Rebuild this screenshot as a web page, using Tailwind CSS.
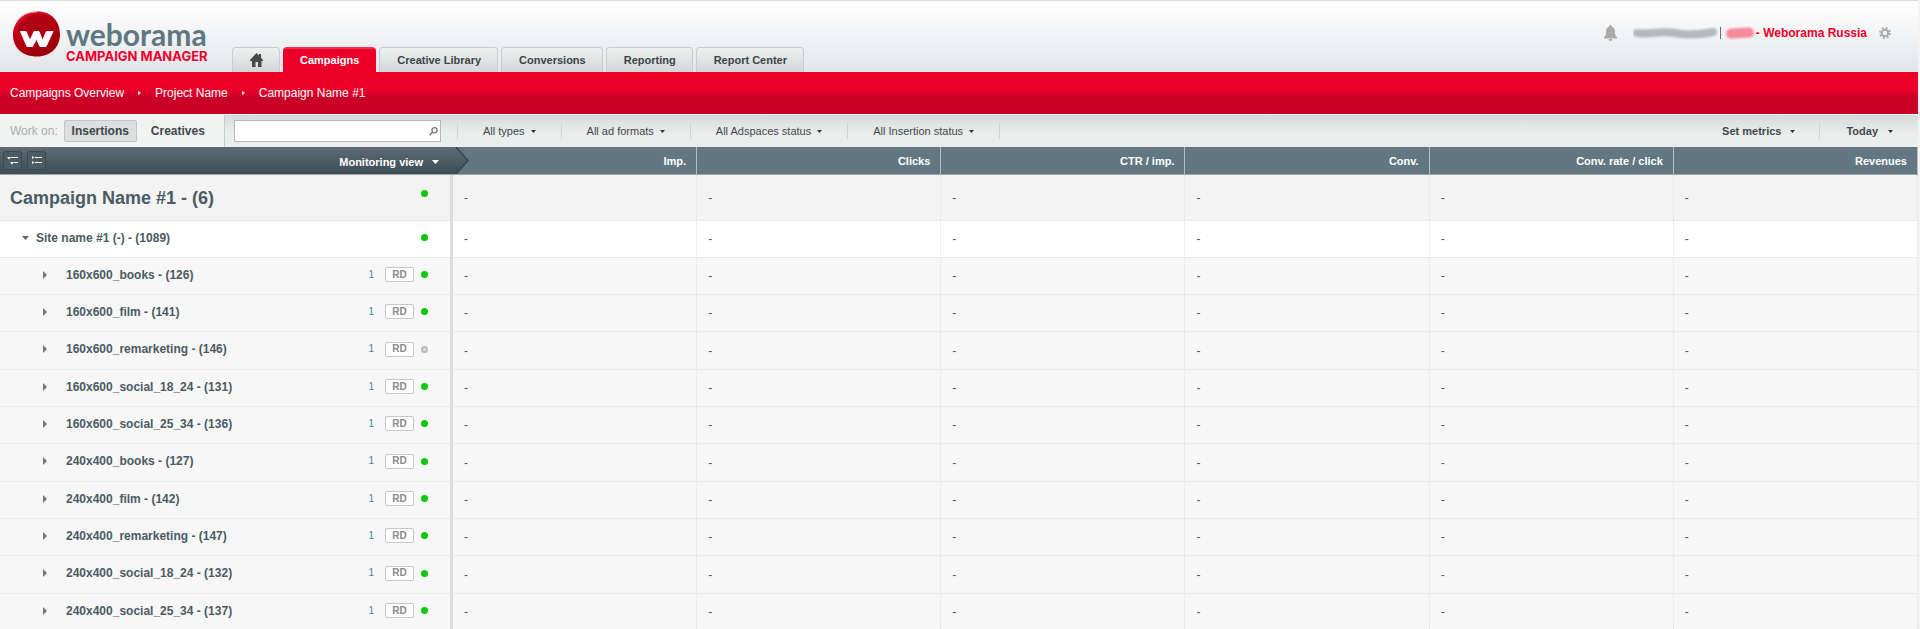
<!DOCTYPE html>
<html lang="en">
<head>
<meta charset="utf-8">
<title>Weborama Campaign Manager</title>
<script src="https://cdn.jsdelivr.net/npm/@tailwindcss/browser@4"></script>
</head>
<body class="h-screen overflow-hidden bg-[#f3f3f3] pr-0.5 font-['Liberation_Sans',Arial,sans-serif] text-xs text-[#4a5b64]">
<header class="flex h-18 items-end justify-between border-t border-[#dcdcde] bg-linear-to-b from-white to-[#e3e6e9]">
  <div class="flex items-end self-stretch">
    <a href="#" aria-label="Weborama Campaign Manager" class="flex w-58 self-start pt-[10px] pl-3">
      <svg class="size-12 shrink-0" viewBox="0 0 48 48" aria-hidden="true">
        <defs>
          <linearGradient id="ball" x1="0" y1="0" x2="0.6" y2="1"><stop offset="0" stop-color="#e8102c"/><stop offset=".5" stop-color="#b80014"/><stop offset="1" stop-color="#980008"/></linearGradient>
          <linearGradient id="shade" x1="0" y1="0" x2="1" y2="1"><stop offset="0" stop-color="#a80012"/><stop offset="1" stop-color="#b00010"/></linearGradient>
        </defs>
        <path d="M25 .5C38 0 48 9 48 23c0 13-9 22.500-23 22.500C11 45.500 1 37 1 24 1 11 11 1 25 .5z" fill="url(#ball)"/>
        <path d="M6 16C10 7 18 3 27 3c10 0 18 7 19 17 0 0-8 7-19 8C15 29 6 25 6 16z" fill="url(#shade)" opacity=".75"/>
        <path d="M4 12C9 3 17 1 25 1" stroke="#f4a0a8" stroke-width="1" fill="none"/>
        <path d="M8.500 20.500h5.500l4 9 4-9h5l3.500 9 4-9h6.500l-7 15h-6l-3.500-7.500-4 7.500h-5.500z" fill="#fff" stroke="#fff" stroke-linejoin="round"/>
      </svg>
      <span class="flex flex-col pt-2 pl-[6px] font-[Lato,sans-serif]">
        <span class="text-[30px] leading-[30px] font-bold text-[#5f7780]">weborama</span>
        <span class="font-[Inter,sans-serif] text-[13px] leading-[15px] font-bold text-[#ee002c]">CAMPAIGN&nbsp;MANAGER</span>
      </span>
    </a>
    <nav class="flex gap-[3px] text-[11px] font-bold text-[#3b4448]" aria-label="Main">
      <a href="#" aria-label="Home" class="flex h-[25px] w-12 items-center justify-center rounded-t-sm border border-b-0 border-[#c9cccd] bg-linear-to-b from-[#eff1f1] to-[#d2d6d6]">
        <svg class="h-[14px] w-[13px]" viewBox="0 0 13 14" fill="#4a4a4a" aria-hidden="true"><path d="M6.500 0L9 2.600V1h2v3.700L13 7v1h-1.500v6H8V9H5.500v5H2V8H0V7z"/></svg>
      </a>
      <a href="#" aria-current="page" class="flex h-[25px] items-center rounded-t-sm border-t-2 border-[#f2304f] bg-[#ec002a] px-[17px] text-white">Campaigns</a>
      <a href="#" class="flex h-[25px] items-center rounded-t-sm border border-b-0 border-[#c9cccd] bg-linear-to-b from-[#eff1f1] to-[#d2d6d6] pr-4 pl-[17px]">Creative Library</a>
      <a href="#" class="flex h-[25px] items-center rounded-t-sm border border-b-0 border-[#c9cccd] bg-linear-to-b from-[#eff1f1] to-[#d2d6d6] pr-4 pl-[17px]">Conversions</a>
      <a href="#" class="flex h-[25px] items-center rounded-t-sm border border-b-0 border-[#c9cccd] bg-linear-to-b from-[#eff1f1] to-[#d2d6d6] pr-4 pl-[17px]">Reporting</a>
      <a href="#" class="flex h-[25px] items-center rounded-t-sm border border-b-0 border-[#c9cccd] bg-linear-to-b from-[#eff1f1] to-[#d2d6d6] pr-4 pl-[17px]">Report Center</a>
    </nav>
  </div>
  <div class="flex items-center self-start pt-6 pr-[27px] font-bold text-[#ec002a]">
    <button type="button" aria-label="Notifications" class="mr-4">
      <svg class="h-[16px] w-[13px]" viewBox="0 0 14 17" fill="#aaa" aria-hidden="true"><path d="M7 0c.8 0 1.200.6 1.200 1.400C10.600 2 11.700 4 11.700 6.500c0 3.500.6 5 2.300 6.500v1.500H0V13c1.700-1.500 2.300-3 2.300-6.500C2.300 4 3.400 2 5.800 1.400 5.800.6 6.200 0 7 0zM5 15h4c0 1-.8 2-2 2s-2-1-2-2z"/></svg>
    </button>
    <svg class="h-[14px] w-[86px]" viewBox="0 0 86 14" aria-hidden="true"><defs><filter id="soft" filterUnits="userSpaceOnUse" x="-4" y="-4" width="100" height="24"><feGaussianBlur stdDeviation="1.200"/></filter></defs><path d="M4 7C16 9 28 4 42 7s28 1 38-1" stroke="#b6b8b9" stroke-width="8" stroke-linecap="round" fill="none" filter="url(#soft)"/></svg>
    <span class="mx-px h-3 w-px bg-[#666a80]"></span>
    <svg class="h-[14px] w-[34px]" viewBox="0 0 34 14" aria-hidden="true"><path d="M9 7.500L27 6.500" stroke="#f88a9c" stroke-width="10" stroke-linecap="round" filter="url(#soft)"/></svg>
    <span class="pr-3">- Weborama Russia</span>
    <button type="button" aria-label="Settings">
      <svg class="size-[12px]" viewBox="0 0 14 14" fill="none" stroke="#aaa" aria-hidden="true"><circle cx="7" cy="7" r="3.800" stroke-width="2.400"/><circle cx="7" cy="7" r="5.800" stroke-width="2.200" stroke-dasharray="2.280 2.275"/></svg>
    </button>
  </div>
</header>
<nav aria-label="Breadcrumb" class="flex h-[42px] items-center bg-linear-to-b from-[#ec002a] from-40% to-[#cb0027] to-60% pl-[10px] text-white">
  <a href="#">Campaigns Overview</a>
  <svg class="mx-[14px] h-1 w-[3px]" viewBox="0 0 3 4" fill="#fff" aria-hidden="true"><path d="M0 0l3 2-3 2z"/></svg>
  <a href="#">Project Name</a>
  <svg class="mx-[14px] h-1 w-[3px]" viewBox="0 0 3 4" fill="#fff" aria-hidden="true"><path d="M0 0l3 2-3 2z"/></svg>
  <a href="#">Campaign Name #1</a>
</nav>
<div class="flex h-[33px] border-t border-white bg-linear-to-b from-[#d6dada] to-[#ebeeed] to-60% text-[11px] text-[#3f484c]">
  <div class="flex w-[225px] items-center border-r border-[#c8cccc] bg-[#f1f3f3] pl-[10px] text-xs">
    <span class="text-[#a9acae]">Work on:</span>
    <button type="button" aria-pressed="true" class="ml-[6px] h-[22px] w-[73px] rounded-xs border border-[#c2c5c6] bg-[#dcdfdf] font-bold">Insertions</button>
    <button type="button" class="ml-[14px] font-bold">Creatives</button>
  </div>
  <label class="my-[5px] ml-[9px] flex h-[22px] w-[207px] items-center border border-[#b4b8ba] bg-white">
    <input type="search" aria-label="Search" class="min-w-0 flex-1 px-1 outline-none">
    <svg class="mr-0.5 size-[9px]" viewBox="0 0 9 9" fill="none" stroke="#777" aria-hidden="true"><circle cx="5.500" cy="3.300" r="2.600" stroke-width="1.300"/><path d="M3.500 5.300L.5 8.300" stroke-width="1.600"/></svg>
  </label>
  <div class="my-2 ml-4 flex border-l border-[#d0d4d4]">
    <button type="button" class="flex items-center gap-[6px] border-r border-[#d0d4d4] px-[25px]">All types<svg class="h-[3px] w-[5px]" viewBox="0 0 5 3" fill="#333" aria-hidden="true"><path d="M0 0h5L2.500 3z"/></svg></button>
    <button type="button" class="flex items-center gap-[6px] border-r border-[#d0d4d4] px-[25px]">All ad formats<svg class="h-[3px] w-[5px]" viewBox="0 0 5 3" fill="#333" aria-hidden="true"><path d="M0 0h5L2.500 3z"/></svg></button>
    <button type="button" class="flex items-center gap-[6px] border-r border-[#d0d4d4] px-[25px]">All Adspaces status<svg class="h-[3px] w-[5px]" viewBox="0 0 5 3" fill="#333" aria-hidden="true"><path d="M0 0h5L2.500 3z"/></svg></button>
    <button type="button" class="flex items-center gap-[6px] border-r border-[#d0d4d4] px-[25px]">All Insertion status<svg class="h-[3px] w-[5px]" viewBox="0 0 5 3" fill="#333" aria-hidden="true"><path d="M0 0h5L2.500 3z"/></svg></button>
  </div>
  <div class="my-2 ml-auto flex font-bold">
    <button type="button" class="flex items-center gap-[9px] border-r border-[#d0d4d4] pr-6">Set metrics<svg class="h-[3px] w-[5px]" viewBox="0 0 5 3" fill="#333" aria-hidden="true"><path d="M0 0h5L2.500 3z"/></svg></button>
    <button type="button" class="flex items-center gap-[10px] pr-[25px] pl-[26px]">Today<svg class="h-[3px] w-[5px]" viewBox="0 0 5 3" fill="#333" aria-hidden="true"><path d="M0 0h5L2.500 3z"/></svg></button>
  </div>
</div>
<table class="w-full table-fixed border-separate border-spacing-0">
  <colgroup><col class="w-[453px]"><col><col><col><col><col><col></colgroup>
  <thead>
    <tr id="columns" class="h-7 text-[11px] text-white">
      <th class="relative border-b border-[#9aa6ac] bg-linear-to-b from-[#5d6c74] to-[#3d4c55] p-0">
        <div class="flex h-[27px] items-center justify-between pr-[14px] pl-[3px]">
          <div class="flex gap-[5px]">
            <button type="button" aria-label="Collapse all" class="flex h-[19px] w-[19px] items-center justify-center rounded-xs border border-[#3a4850] bg-[#4c5b64]">
              <svg class="h-[9px] w-[11px]" viewBox="0 0 11 9" fill="#fff" aria-hidden="true"><path d="M0 1h4L2 3.500zM4 1h7v1H4zM3 6h4L5 8.500zM7 6h4v1H7z"/></svg>
            </button>
            <button type="button" aria-label="Expand all" class="flex h-[19px] w-[19px] items-center justify-center rounded-xs border border-[#3a4850] bg-[#4c5b64]">
              <svg class="h-[9px] w-[10px]" viewBox="0 0 10 9" fill="#fff" aria-hidden="true"><path d="M0 0l2.500 1.500L0 3zM3 1h7v1H3zM0 5l2.500 1.500L0 8zM3 6h7v1H3z"/></svg>
            </button>
          </div>
          <button type="button" class="flex items-center gap-[9px] pt-[3px]">Monitoring view<svg class="h-1 w-[7px]" viewBox="0 0 8 4" preserveAspectRatio="none" fill="#fff" aria-hidden="true"><path d="M0 0h8L4 4z"/></svg></button>
        </div>
        <svg class="absolute top-0 left-full z-10 h-[27px] w-[16px]" viewBox="0 0 16 27" aria-hidden="true">
          <defs><linearGradient id="tip" x1="0" y1="0" x2="0" y2="1"><stop offset="0" stop-color="#5d6c74"/><stop offset="1" stop-color="#3d4c55"/></linearGradient></defs>
          <path d="M0 0h3l12 13.500L3 27H0z" fill="url(#tip)"/><path d="M3 0l12 13.500L3 27" fill="none" stroke="#37454d" stroke-width="1.500"/>
        </svg>
      </th>
    </tr>
  </thead>
  <tbody id="groups"></tbody>
  <tbody id="insertions"></tbody>
</table>
<script>
const metrics = ['Imp.', 'Clicks', 'CTR / imp.', 'Conv.', 'Conv. rate / click', 'Revenues'];
document.getElementById('columns').insertAdjacentHTML('beforeend', metrics.map(m =>
  `<th class="border-r border-b border-r-[#b4bec3] border-b-[#9aa6ac] bg-[#637782] pt-px pr-[10px] text-right">${m}</th>`).join(''));

const cells = metrics.map(() => '<td class="border-r border-b border-r-[#dde3e4] border-b-[#e9e9e9] pl-[11px] [border-right-style:dotted]">-</td>').join('');
const dot = on => on
  ? '<span role="img" aria-label="Active" class="size-[7px] rounded-full bg-[#0bc80b]"></span>'
  : '<span role="img" aria-label="Inactive" class="size-[7px] rounded-full border-2 border-[#b8bbbd] bg-[#dcdcdc]"></span>';
const down = '<svg class="h-1 w-[7px]" viewBox="0 0 7 4" fill="#666" aria-hidden="true"><path d="M0 0h7L3.500 4z"/></svg>';
const right = '<svg class="h-2 w-1" viewBox="0 0 4 8" fill="#777" aria-hidden="true"><path d="M0 0l4 4-4 4z"/></svg>';

document.getElementById('groups').innerHTML = `
  <tr class="h-[46px] bg-[#f3f3f3]">
    <th class="border-r-3 border-b border-r-[#dcdcdc] border-b-[#e3e5e5] p-0">
      <div class="flex items-center justify-between pr-[22px] pl-[10px] text-lg"><span>Campaign Name #1 - (6)</span><span class="flex pb-[9px]">${dot(true)}</span></div>
    </th>${cells}
  </tr>
  <tr class="h-[37px] bg-white">
    <th class="border-r-3 border-b border-r-[#dcdcdc] border-b-[#e9e9e9] p-0">
      <div class="flex items-center pr-[22px] pb-[3px] pl-[22px]"><button type="button" aria-label="Collapse site" class="mr-[7px]">${down}</button><span class="flex-1 text-left">Site name #1 (-) - (1089)</span>${dot(true)}</div>
    </th>${cells}
  </tr>`;

const rows = [
  ['160x600_books', 126, 1], ['160x600_film', 141, 1], ['160x600_remarketing', 146, 0],
  ['160x600_social_18_24', 131, 1], ['160x600_social_25_34', 136, 1],
  ['240x400_books', 127, 1], ['240x400_film', 142, 1], ['240x400_remarketing', 147, 1],
  ['240x400_social_18_24', 132, 1], ['240x400_social_25_34', 137, 1],
];
document.getElementById('insertions').innerHTML = rows.map(([name, id, on]) => `
  <tr class="h-[37px] bg-[#f7f7f7] nth-[3n]:h-[38px]">
    <th class="border-r-3 border-b border-r-[#dcdcdc] border-b-[#ececec] p-0">
      <div class="flex items-center pr-[22px] pb-[3px] pl-[43px]">
        <button type="button" aria-label="Expand ${name}" class="mr-[19px]">${right}</button>
        <span class="flex-1 text-left">${name} - (${id})</span>
        <a href="#" class="mr-[11px] text-[10px] font-normal text-[#3f86ad]">1</a>
        <span class="mr-[7px] flex h-[15px] w-[29px] items-center justify-center rounded-xs border border-[#c8c8c8] bg-white text-[10px] text-[#8a8a8a]">RD</span>
        ${dot(on)}
      </div>
    </th>${cells}
  </tr>`).join('');
</script>
</body>
</html>
